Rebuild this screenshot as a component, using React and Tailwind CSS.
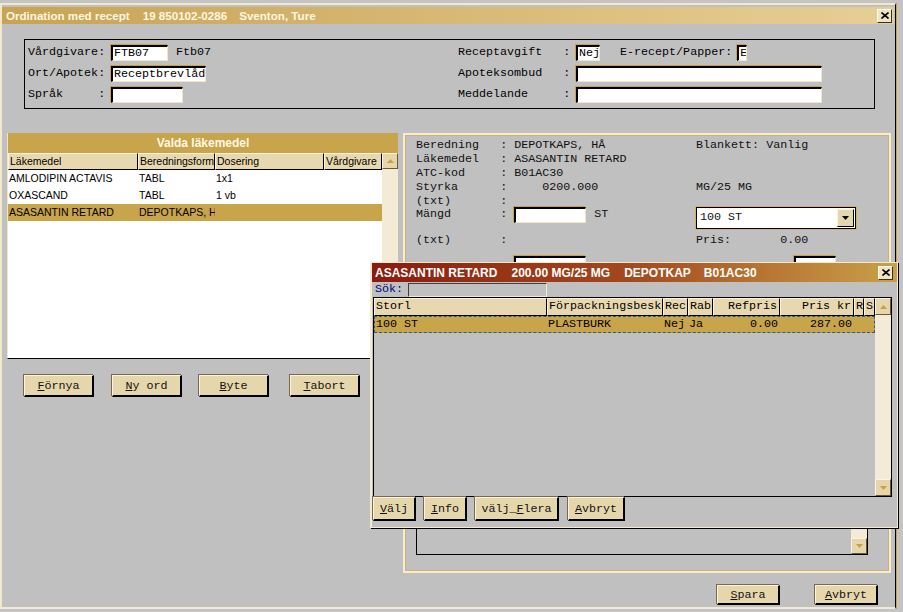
import React from "react";

const sans = "font-['Liberation_Sans',Arial,sans-serif]";

function Field({ w, children, cls = "" }) {
  return (
    <div
      className={`h-[16px] bg-white border-t-2 border-l-2 border-r border-b border-t-black border-l-black border-r-[#f2e6c6] border-b-[#f2e6c6] shadow-[-1px_-1px_0_#c8a048] text-[11.7px] leading-[12px] pl-[1px] overflow-hidden whitespace-pre ${w} ${cls}`}
    >
      {children}
    </div>
  );
}

function Btn({ u, rest, cls = "" }) {
  return (
    <div
      className={`flex items-center justify-center bg-[#e6d6ac] border border-[#fbf4e2] border-r-2 border-b-2 border-r-black border-b-black shadow-[-1px_-1px_0_#7a6a48] text-[11.7px] leading-[12px] text-[#111] whitespace-pre ${cls}`}
    >
      <span>
        <span className="underline">{u}</span>
        {rest}
      </span>
    </div>
  );
}

function ScrollBtn({ down, cls = "h-[16px]" }) {
  return (
    <div
      className={`w-[16px] shrink-0 bg-[#e6d6ac] border border-[#fbf4e2] border-r-[#6b5a30] border-b-[#6b5a30] flex items-center justify-center ${cls}`}
    >
      <svg width="7" height="4" viewBox="0 0 7 4">
        <polygon points={down ? "0,0 7,0 3.5,4" : "0,4 7,4 3.5,0"} fill="#c8a048" />
      </svg>
    </div>
  );
}

function CloseBtn() {
  return (
    <div className="w-[15px] h-[14px] bg-[#efe4c6] border border-[#fff9ea] border-r-[#3a3020] border-b-[#3a3020] flex items-center justify-center">
      <svg width="8" height="7" viewBox="0 0 8 7">
        <path d="M0.5 0.5 L7.5 6.5 M7.5 0.5 L0.5 6.5" stroke="#000" strokeWidth="1.6" />
      </svg>
    </div>
  );
}

function HeadCell({ w, children, right = false }) {
  return (
    <div
      className={`h-full ${w} shrink-0 bg-[#e8d8b0] border border-[#fbf3de] border-r-black border-b-black overflow-hidden whitespace-pre flex items-center ${right ? "justify-end pr-[2px]" : "pl-[1px]"}`}
    >
      {children}
    </div>
  );
}

function Cell({ w, children, right = false }) {
  return (
    <div
      className={`${w} shrink-0 overflow-hidden whitespace-pre ${right ? "text-right pr-[2px]" : "pl-[1px]"}`}
    >
      {children}
    </div>
  );
}

export default function App() {
  return (
    <div className="relative w-[903px] h-[612px] overflow-hidden bg-[#c4c4c4] font-['Liberation_Mono','Courier_New',monospace] text-black">
      {/* main window */}
      <div className="mt-[3px] w-[896px] h-[606px] bg-[#c0c0c0] border-t-2 border-l-2 border-b-2 border-[#f2e8cc] border-r border-r-black shadow-[1px_0_0_#c8a048] flex flex-col pt-[2px]">
        {/* title bar */}
        <div className="h-[17px] mr-[1px] shrink-0 flex items-center justify-between bg-linear-to-r from-[#c8a352] to-[#e6cf96] pl-[4px] pr-[2px]">
          <div className={`${sans} font-bold text-[11.6px] text-[#fdf6e3] whitespace-pre flex`}>
            <span>Ordination med recept</span>
            <span className="ml-[13px]">19 850102-0286</span>
            <span className="ml-[12px]">Sventon, Ture</span>
          </div>
          <CloseBtn />
        </div>

        {/* top form */}
        <div className="ml-[22px] mt-[15px] w-[851px] h-[70px] shrink-0 border border-black flex pt-[5px] pl-[3px] text-[11.7px]">
          <div className="w-[430px] flex flex-col gap-[5px]">
            <div className="h-[16px] flex items-center whitespace-pre">
              <span className="w-[83px]">Vårdgivare:</span>
              <Field w="w-[57px]">FTB07</Field>
              <span className="ml-[8px]">Ftb07</span>
            </div>
            <div className="h-[16px] flex items-center whitespace-pre">
              <span className="w-[83px]">Ort/Apotek:</span>
              <Field w="w-[95px]" cls="pl-0">Receptbrevlåd</Field>
            </div>
            <div className="h-[16px] flex items-center whitespace-pre">
              <span className="w-[83px]">Språk     :</span>
              <Field w="w-[72px]"></Field>
            </div>
          </div>
          <div className="flex flex-col gap-[5px]">
            <div className="h-[16px] flex items-center whitespace-pre">
              <span className="w-[118px]">Receptavgift   :</span>
              <Field w="w-[24px]">Nej</Field>
              <span className="ml-[20px]">E-recept/Papper:</span>
              <Field w="w-[10px]" cls="ml-[5px] pl-0">E</Field>
            </div>
            <div className="h-[16px] flex items-center whitespace-pre">
              <span className="w-[118px]">Apoteksombud   :</span>
              <Field w="w-[246px]"></Field>
            </div>
            <div className="h-[16px] flex items-center whitespace-pre">
              <span className="w-[118px]">Meddelande     :</span>
              <Field w="w-[246px]"></Field>
            </div>
          </div>
        </div>

        {/* lower section */}
        <div className="flex mt-[24px] shrink-0">
          {/* left column */}
          <div className="ml-[5px] w-[391px] flex flex-col">
            <div className="h-[226px] flex flex-col border-l border-[#f0e6c8] border-b border-b-black">
              <div className={`${sans} h-[20px] shrink-0 bg-[#c8a44a] flex items-center justify-center text-[12px] font-bold text-[#fff8e6]`}>
                Valda läkemedel
              </div>
              <div className="flex flex-1">
                <div className={`${sans} w-[374px] bg-white flex flex-col text-[10.5px]`}>
                  <div className="h-[17px] flex">
                    <HeadCell w="w-[130px]">Läkemedel</HeadCell>
                    <HeadCell w="w-[77px]">Beredningsform</HeadCell>
                    <HeadCell w="w-[109px]">Dosering</HeadCell>
                    <HeadCell w="w-[58px]">Vårdgivare</HeadCell>
                  </div>
                  <div className="h-[17px] flex items-center">
                    <Cell w="w-[130px]">AMLODIPIN ACTAVIS</Cell>
                    <Cell w="w-[77px]">TABL</Cell>
                    <Cell w="w-[109px]">1x1</Cell>
                  </div>
                  <div className="h-[17px] flex items-center">
                    <Cell w="w-[130px]">OXASCAND</Cell>
                    <Cell w="w-[77px]">TABL</Cell>
                    <Cell w="w-[109px]">1 vb</Cell>
                  </div>
                  <div className="h-[17px] flex items-center bg-[#c8a44a]">
                    <Cell w="w-[130px]">ASASANTIN RETARD</Cell>
                    <Cell w="w-[77px]">DEPOTKAPS, HÅ</Cell>
                    <Cell w="w-[109px]"></Cell>
                  </div>
                </div>
                <div className="w-[16px] flex flex-col">
                  <ScrollBtn cls="h-[16px]" />
                  <div className="flex-1 bg-[#f3ebd6]"></div>
                </div>
              </div>
            </div>
            <div className="flex mt-[16px] h-[22px]">
              <Btn u="F" rest="örnya" cls="ml-[17px] w-[70px] h-[22px]" />
              <Btn u="N" rest="y ord" cls="ml-[18px] w-[70px] h-[22px]" />
              <Btn u="B" rest="yte" cls="ml-[17px] w-[70px] h-[22px]" />
              <Btn u="T" rest="abort" cls="ml-[21px] w-[70px] h-[22px]" />
            </div>
          </div>

          {/* right panel */}
          <div className="ml-[5px] w-[488px] h-[440px] border-2 border-[#f4ecd4]">
            <div className="w-full h-full border border-[#d4b060] flex flex-col pl-[10px] pt-[2px] text-[11.7px] text-[#111]">
              <div className="flex h-[14px] leading-[14px] whitespace-pre">
                <div className="w-[280px]">Beredning   : DEPOTKAPS, HÅ</div>
                <div>Blankett: Vanlig</div>
              </div>
              <div className="flex h-[14px] leading-[14px] whitespace-pre">
                <div className="w-[280px]">Läkemedel   : ASASANTIN RETARD</div>
              </div>
              <div className="flex h-[14px] leading-[14px] whitespace-pre">
                <div className="w-[280px]">ATC-kod     : B01AC30</div>
              </div>
              <div className="flex h-[14px] leading-[14px] whitespace-pre">
                <div className="w-[280px]">Styrka      :     0200.000</div>
                <div>MG/25 MG</div>
              </div>
              <div className="flex h-[14px] leading-[14px] whitespace-pre">
                <div className="w-[280px]">(txt)       :</div>
              </div>
              <div className="flex h-[21px] whitespace-pre">
                <div className="w-[280px] h-[16px] mt-[-1px] flex items-center">
                  <span>Mängd       : </span>
                  <Field w="w-[72px]"></Field>
                  <span className="ml-[8px]">ST</span>
                </div>
                <div className="w-[160px] h-[22px] mt-[-1px] flex items-center bg-white border border-black shadow-[0_0_0_1px_#d4b060]">
                  <span className="flex-1 pl-[3px]">100 ST</span>
                  <div className="w-[17px] h-[18px] mr-[1px] bg-[#e6d6ac] border border-[#fbf4e2] border-r-black border-b-black flex items-center justify-center">
                    <svg width="7" height="4" viewBox="0 0 7 4">
                      <polygon points="0,0 7,0 3.5,4" fill="#000" />
                    </svg>
                  </div>
                </div>
              </div>
              <div className="flex h-[14px] mt-[4px] leading-[14px] whitespace-pre">
                <div className="w-[280px]">(txt)       :</div>
                <div>Pris:       0.00</div>
              </div>
              <div className="flex mt-[9px]">
                <Field w="w-[72px]" cls="ml-[98px]"></Field>
                <Field w="w-[42px]" cls="ml-[208px]"></Field>
              </div>
              <div className="mt-auto mb-[15px] w-[452px] h-[84px] border border-black flex justify-end">
                <div className="w-[16px] flex flex-col">
                  <div className="flex-1 bg-[#f3ebd6]"></div>
                  <ScrollBtn down cls="h-[16px]" />
                </div>
              </div>
            </div>
          </div>
        </div>

        {/* bottom buttons */}
        <div className="flex mt-[12px]">
          <Btn u="S" rest="para" cls="ml-[715px] w-[63px] h-[20px]" />
          <Btn u="A" rest="vbryt" cls="ml-[35px] w-[63px] h-[20px]" />
        </div>
      </div>

      {/* popup dialog */}
      <div className="absolute left-[370px] top-[262px] w-[528px] h-[266px] bg-[#c0c0c0] border-t border-l-2 border-r border-b border-[#f4ead0] shadow-[1px_1px_0_#000] flex flex-col">
        <div className="h-[19px] shrink-0 flex items-center justify-between bg-linear-to-r from-[#8a1a0e] via-[#a44a1e] to-[#c8a048] pl-[3px] pr-[4px]">
          <div className={`${sans} font-bold text-[12px] text-white whitespace-pre flex`}>
            <span>ASASANTIN RETARD</span>
            <span className="ml-[14px]">200.00 MG/25 MG</span>
            <span className="ml-[14px]">DEPOTKAP</span>
            <span className="ml-[13px]">B01AC30</span>
          </div>
          <CloseBtn />
        </div>
        <div className="h-[15px] shrink-0 flex items-center text-[11.7px]">
          <span className="w-[36px] pl-[3px] text-[#000080]">Sök:</span>
          <div className="w-[139px] h-[14px] bg-[#c0c0c0] border border-[#404040] border-r-[#f4ead0] border-b-[#f4ead0]"></div>
        </div>
        <div className="ml-[1px] w-[519px] h-[200px] shrink-0 border border-black flex text-[11.7px]">
          <div className="w-[501px] flex flex-col">
            <div className="h-[18px] flex">
              <HeadCell w="w-[173px]">Storl</HeadCell>
              <HeadCell w="w-[116px]">Förpackningsbesk</HeadCell>
              <HeadCell w="w-[25px]">Rec</HeadCell>
              <HeadCell w="w-[25px]">Rab</HeadCell>
              <HeadCell w="w-[67px]" right>Refpris</HeadCell>
              <HeadCell w="w-[74px]" right>Pris kr</HeadCell>
              <HeadCell w="w-[10px]">R</HeadCell>
              <HeadCell w="w-[11px]">S</HeadCell>
            </div>
            <div className="h-[17px] flex items-center bg-[#c8a44a] border border-dashed border-[#2a5f80]">
              <Cell w="w-[172px]">100 ST</Cell>
              <Cell w="w-[116px]">PLASTBURK</Cell>
              <Cell w="w-[25px]">Nej</Cell>
              <Cell w="w-[25px]">Ja</Cell>
              <Cell w="w-[67px]" right>0.00</Cell>
              <Cell w="w-[74px]" right>287.00</Cell>
            </div>
          </div>
          <div className="w-[16px] flex flex-col">
            <ScrollBtn cls="h-[17px]" />
            <div className="flex-1 bg-[#f3ebd6]"></div>
            <ScrollBtn down cls="h-[17px]" />
          </div>
        </div>
        <div className="h-[24px] shrink-0 flex">
          <Btn u="V" rest="älj" cls="ml-[1px] w-[43px] h-[24px]" />
          <Btn u="I" rest="nfo" cls="ml-[8px] w-[43px] h-[24px]" />
          <div className="ml-[8px] w-[84px] h-[24px] flex items-center justify-center bg-[#e6d6ac] border border-[#fbf4e2] border-r-2 border-b-2 border-r-black border-b-black shadow-[-1px_-1px_0_#7a6a48] text-[11.7px] leading-[12px] text-[#111] whitespace-pre">
            <span>
              välj_<span className="underline">F</span>lera
            </span>
          </div>
          <Btn u="A" rest="vbryt" cls="ml-[9px] w-[57px] h-[24px]" />
        </div>
      </div>
    </div>
  );
}
